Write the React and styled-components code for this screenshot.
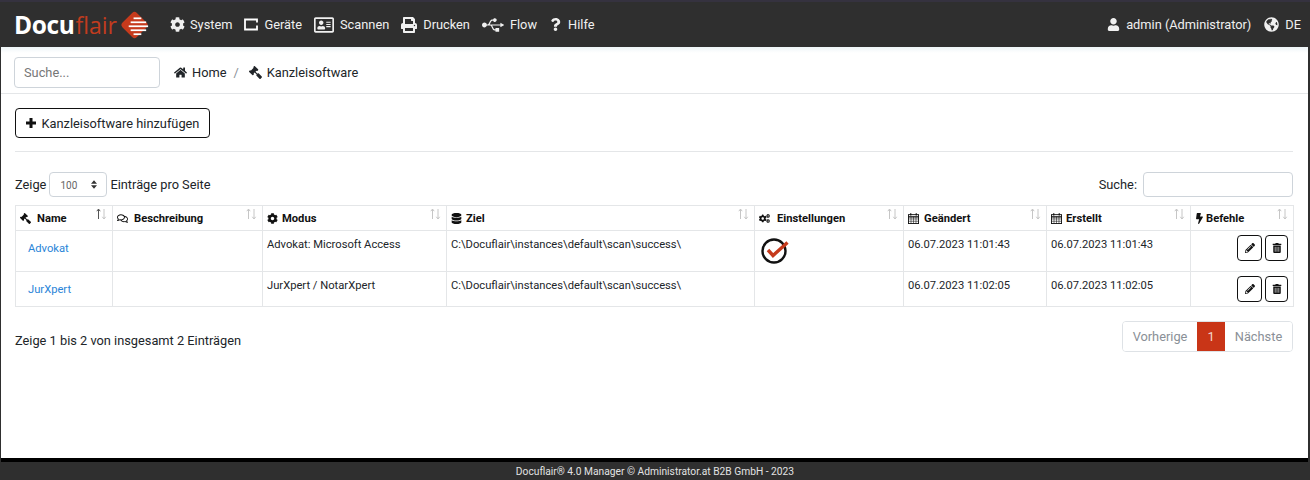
import React from "react";
import styled, { createGlobalStyle } from "styled-components";
import {
  FaCog, FaHome, FaGavel, FaRegComments, FaDatabase, FaBolt,
  FaPencilAlt, FaTrashAlt, FaUser, FaGlobeAmericas, FaUsb, FaPrint, FaQuestion, FaRegAddressCard, FaCogs,
} from "react-icons/fa";

const Global = createGlobalStyle`
  html, body { margin: 0; padding: 0; background: #2d2d2d; }
  * { box-sizing: border-box; }
  body { font-family: Roboto, "Liberation Sans", sans-serif; color: #212529; }
`;

const Page = styled.div`
  width: 1310px; height: 480px; display: flex; flex-direction: column; overflow: hidden;
  background: #2f2f2f; border-top: 2px solid #35323f;
`;
const Header = styled.header`
  height: 45px; flex: none; display: flex; align-items: center; justify-content: space-between;
  padding: 0 9px 0 14px; background: #2f2f2f; color: #f0f0f0; font-size: 12.8px;
`;
const Left = styled.div`display: flex; align-items: center;`;
const Logo = styled.div`display: flex; align-items: center; margin-right: 21px; width: 135px; height: 30px;`;
const LogoDocu = styled.span`font: 700 24.5px "Open Sans", sans-serif; color: #fff; letter-spacing: -0.4px; margin-right: 1px;`;
const LogoFlair = styled.span`font: 400 23px "Open Sans", sans-serif; color: #c23c1e; margin-right: 3px;`;
const Nav = styled.nav`display: flex; align-items: center; gap: 12px;`;
const NavItem = styled.span`display: inline-flex; align-items: center; gap: ${p => p.$gap || 6}px; font-size: 12.8px; white-space: nowrap;`;
const Right = styled.div`display: flex; align-items: center; gap: 13px;`;

const Body = styled.div`
  flex: 1; display: flex; flex-direction: column; margin: 0 2px 0 1px; background: #fff;
  border-bottom: 4px solid #000; min-height: 0;
`;
const Crumbs = styled.div`
  height: 47px; flex: none; display: flex; align-items: center; padding: 5px 13px 0;
  border-bottom: 1px solid #e4e6e8; background: linear-gradient(#eef5f8, #fff 6px);
  font-size: 12.8px;
`;
const SearchBox = styled.div`
  width: 146px; height: 31px; border: 1px solid #ced4da; border-radius: 4px; padding: 0 9px;
  display: flex; align-items: center; color: #777; font-size: 12.8px; margin-right: 14px;
`;
const Crumb = styled.span`display: inline-flex; align-items: center; gap: 5px;`;
const Sep = styled.span`color: #8a9097; margin: 0 10px 0 7px;`;
const Gavel = styled(FaGavel)`transform: scaleX(-1);`;
const Bolt = styled(FaBolt)`width: 7px; margin: 0 3px 0 1px;`;
const Content = styled.main`padding: 14px 15px 0 14px;`;
const AddButton = styled.button`
  height: 30px; width: 195px; display: flex; align-items: center; justify-content: center; gap: 6px;
  border: 1px solid #111; border-radius: 4px; background: #fff; font: 12.8px Roboto, sans-serif; color: #212529; padding: 0;
`;
const PlusIcon = styled.svg`width: 10px; height: 10px; fill: #111;`;
const Divider = styled.hr`border: 0; border-top: 1px solid #e4e6e8; margin: 13px 0 20px;`;
const Controls = styled.div`display: flex; align-items: center; justify-content: space-between; height: 25px; font-size: 12.8px;`;
const Inline = styled.label`display: flex; align-items: center; gap: 3px;`;
const Select = styled.div`
  width: 58px; height: 25px; border: 1px solid #ced4da; border-radius: 4px; color: #666; font-size: 10px;
  display: flex; align-items: center; justify-content: space-between; padding: 2px 9px 0 10px;
`;
const Caret = styled.svg`width: 6px; height: 9px; fill: #333; margin-top: -2px;`;
const FilterInput = styled.div`width: 150px; height: 25px; border: 1px solid #ced4da; border-radius: 4px; margin-left: 3px;`;

const Table = styled.table`
  width: 1278px; margin-top: 8px; border-collapse: collapse; table-layout: fixed; font-size: 11.2px;
  th, td { border: 1px solid #e4e6e8; vertical-align: top; }
`;
const Th = styled.th`
  height: 25px; padding: 0 4px; text-align: left; font-weight: 700; color: #111; position: relative;
`;
const ThInner = styled.span`display: inline-flex; align-items: center; gap: ${p => p.$gap}px; height: 24px;`;
const SortIcon = styled.svg`position: absolute; right: 5px; top: 2px; width: 11px; height: 12px; fill: none; stroke-width: 1;`;
const Td = styled.td`padding: 7px 4px 0; color: #212529; white-space: nowrap;`;
const NameCell = styled(Td)`padding: 11px 12px 0;`;
const SettingsCell = styled(Td)`padding-top: 8px;`;
const Link = styled.a`color: #2a85d8; text-decoration: none;`;
const Row = styled.tr`height: ${p => p.$h}px;`;
const Actions = styled.div`display: flex; justify-content: flex-end; gap: 3px; margin-top: 4px;`;
const ActionCell = styled.td`padding: 0 5px 0 0;`;
const IconButton = styled.button`
  width: ${p => p.$w}px; height: 26px; padding: 0; display: flex; align-items: center; justify-content: center;
  border: 1px solid #111; border-radius: 4px; background: #fff; color: #111; font-size: 11px;
`;
const Check = styled.svg`display: block; width: 28px; height: 28px; margin: -2px 0 0 2px;`;
const Foot = styled.div`display: flex; align-items: center; justify-content: space-between; margin-top: 14px; font-size: 12.8px;`;
const FootText = styled.span`padding-top: 8px;`;
const Pager = styled.div`display: flex; height: 31px; border: 1px solid #dee2e6; border-radius: 4px; overflow: hidden; font-size: 12.8px; align-items: stretch;`;
const PageCell = styled.span`
  display: flex; align-items: center; justify-content: center; width: ${p => p.$w}px;
  background: ${p => p.$on ? "#c93517" : "#fff"}; color: ${p => p.$on ? "#f3d7d0" : "#8a9097"};
`;
const Footer = styled.footer`
  height: 18px; flex: none; text-align: center; font-size: 10.24px; line-height: 19px; color: #e2e2e2; background: #2f2f2f;
`;

const LogoMark = () => (
  <svg width="30" height="30" viewBox="0 0 30 30">
    <rect x="4.5" y="4.5" width="21" height="21" rx="3.5" transform="rotate(45 15 15)" fill="#c63a1c" />
    <g fill="#fff">
      <rect x="14" y="7.2" width="8" height="1.8" />
      <rect x="11" y="11.3" width="16" height="1.8" />
      <rect x="9" y="15.4" width="20" height="1.8" />
      <rect x="11" y="19.5" width="16" height="1.8" />
      <rect x="14" y="23.6" width="8" height="1.8" />
    </g>
  </svg>
);

const Calendar = ({ size }) => (
  <svg width={size} height={size} viewBox="0 0 12 12" fill="none" stroke="currentColor">
    <rect x="0.5" y="1.8" width="11" height="9.7" strokeWidth="1" />
    <path d="M0.5 4.2h11" strokeWidth="1.4" />
    <path d="M3.3 4v7.5M6 4v7.5M8.7 4v7.5M.5 6.5h11M.5 9h11" strokeWidth=".6" />
    <path d="M3 .3v2.4M9 .3v2.4" strokeWidth="1.3" />
  </svg>
);

const Sort = ({ dark }) => (
  <SortIcon viewBox="0 0 11 12">
    <path d="M2.5 11V1M.8 3.2 2.5 1l1.7 2.2" stroke={dark ? "#555" : "#c6c6c6"} />
    <path d="M8 1v10M6.3 8.8 8 11l1.7-2.2" stroke="#c6c6c6" />
  </SortIcon>
);

const cols = [97, 150, 184, 308, 149, 143, 144, 103];
const heads = [
  [Gavel, "Name", 6, true], [FaRegComments, "Beschreibung", 6], [FaCog, "Modus", 4], [FaDatabase, "Ziel", 4],
  [FaCogs, "Einstellungen", 7], [Calendar, "Geändert", 5], [Calendar, "Erstellt", 4], [Bolt, "Befehle", 0],
];
const rows = [
  { name: "Advokat", mode: "Advokat: Microsoft Access", ok: true, ch: "06.07.2023 11:01:43", h: 41 },
  { name: "JurXpert", mode: "JurXpert / NotarXpert", ok: false, ch: "06.07.2023 11:02:05", h: 35 },
];

export default function App() {
  return (
    <Page>
      <Global />
      <Header>
        <Left>
          <Logo>
            <LogoDocu>Docu</LogoDocu><LogoFlair>flair</LogoFlair><LogoMark />
          </Logo>
          <Nav>
            <NavItem $gap={5}><FaCog size={15} />System</NavItem>
            <NavItem><svg width="14" height="13" viewBox="0 0 14 13"><path d="M1 1.5h12v10H1z" fill="none" stroke="#fff" strokeWidth="1.8" /><rect x="11.5" y="4.5" width="2.5" height="3" fill="#2f2f2f" /></svg>Geräte</NavItem>
            <NavItem><FaRegAddressCard size={20} />Scannen</NavItem>
            <NavItem><FaPrint size={16} />Drucken</NavItem>
            <NavItem><FaUsb size={22} />Flow</NavItem>
            <NavItem><FaQuestion size={13} />Hilfe</NavItem>
          </Nav>
        </Left>
        <Right>
          <NavItem><FaUser size={13} />admin (Administrator)</NavItem>
          <NavItem><FaGlobeAmericas size={15} />DE</NavItem>
        </Right>
      </Header>
      <Body>
        <Crumbs>
          <SearchBox>Suche...</SearchBox>
          <Crumb><FaHome size={13} />Home</Crumb>
          <Sep>/</Sep>
          <Crumb><Gavel size={13} />Kanzleisoftware</Crumb>
        </Crumbs>
        <Content>
          <AddButton>
            <PlusIcon viewBox="0 0 10 10"><path d="M3.5 0h3v3.5H10v3H6.5V10h-3V6.5H0v-3h3.5z" /></PlusIcon>
            Kanzleisoftware hinzufügen
          </AddButton>
          <Divider />
          <Controls>
            <Inline>Zeige <Select>100<Caret viewBox="0 0 7 10"><path d="M3.5 0 7 4H0zM3.5 10 0 6h7z" /></Caret></Select> Einträge pro Seite</Inline>
            <Inline>Suche: <FilterInput /></Inline>
          </Controls>
          <Table>
            <colgroup>{cols.map((w, i) => <col key={i} style={{ width: w }} />)}</colgroup>
            <thead>
              <tr>
                {heads.map(([Icon, label, gap, dark]) => (
                  <Th key={label}><ThInner $gap={gap}><Icon size={11} />{label}</ThInner><Sort dark={dark} /></Th>
                ))}
              </tr>
            </thead>
            <tbody>
              {rows.map(r => (
                <Row key={r.name} $h={r.h}>
                  <NameCell><Link href="#">{r.name}</Link></NameCell>
                  <Td />
                  <Td>{r.mode}</Td>
                  <Td>C:\Docuflair\instances\default\scan\success\</Td>
                  <SettingsCell>
                    {r.ok && (
                      <Check viewBox="0 0 28 28">
                        <circle cx="13" cy="14" r="11.5" fill="none" stroke="#111" strokeWidth="2.4" />
                        <path d="M7 13l5 5.5L26.5 5.5" fill="none" stroke="#c63a1c" strokeWidth="3.4" />
                      </Check>
                    )}
                  </SettingsCell>
                  <Td>{r.ch}</Td>
                  <Td>{r.ch}</Td>
                  <ActionCell>
                    <Actions>
                      <IconButton $w={25}><FaPencilAlt size={10} /></IconButton>
                      <IconButton $w={23}><FaTrashAlt size={10} /></IconButton>
                    </Actions>
                  </ActionCell>
                </Row>
              ))}
            </tbody>
          </Table>
          <Foot>
            <FootText>Zeige 1 bis 2 von insgesamt 2 Einträgen</FootText>
            <Pager>
              <PageCell $w={74}>Vorherige</PageCell>
              <PageCell $w={28} $on>1</PageCell>
              <PageCell $w={67}>Nächste</PageCell>
            </Pager>
          </Foot>
        </Content>
      </Body>
      <Footer>Docuflair® 4.0 Manager © Administrator.at B2B GmbH - 2023</Footer>
    </Page>
  );
}
